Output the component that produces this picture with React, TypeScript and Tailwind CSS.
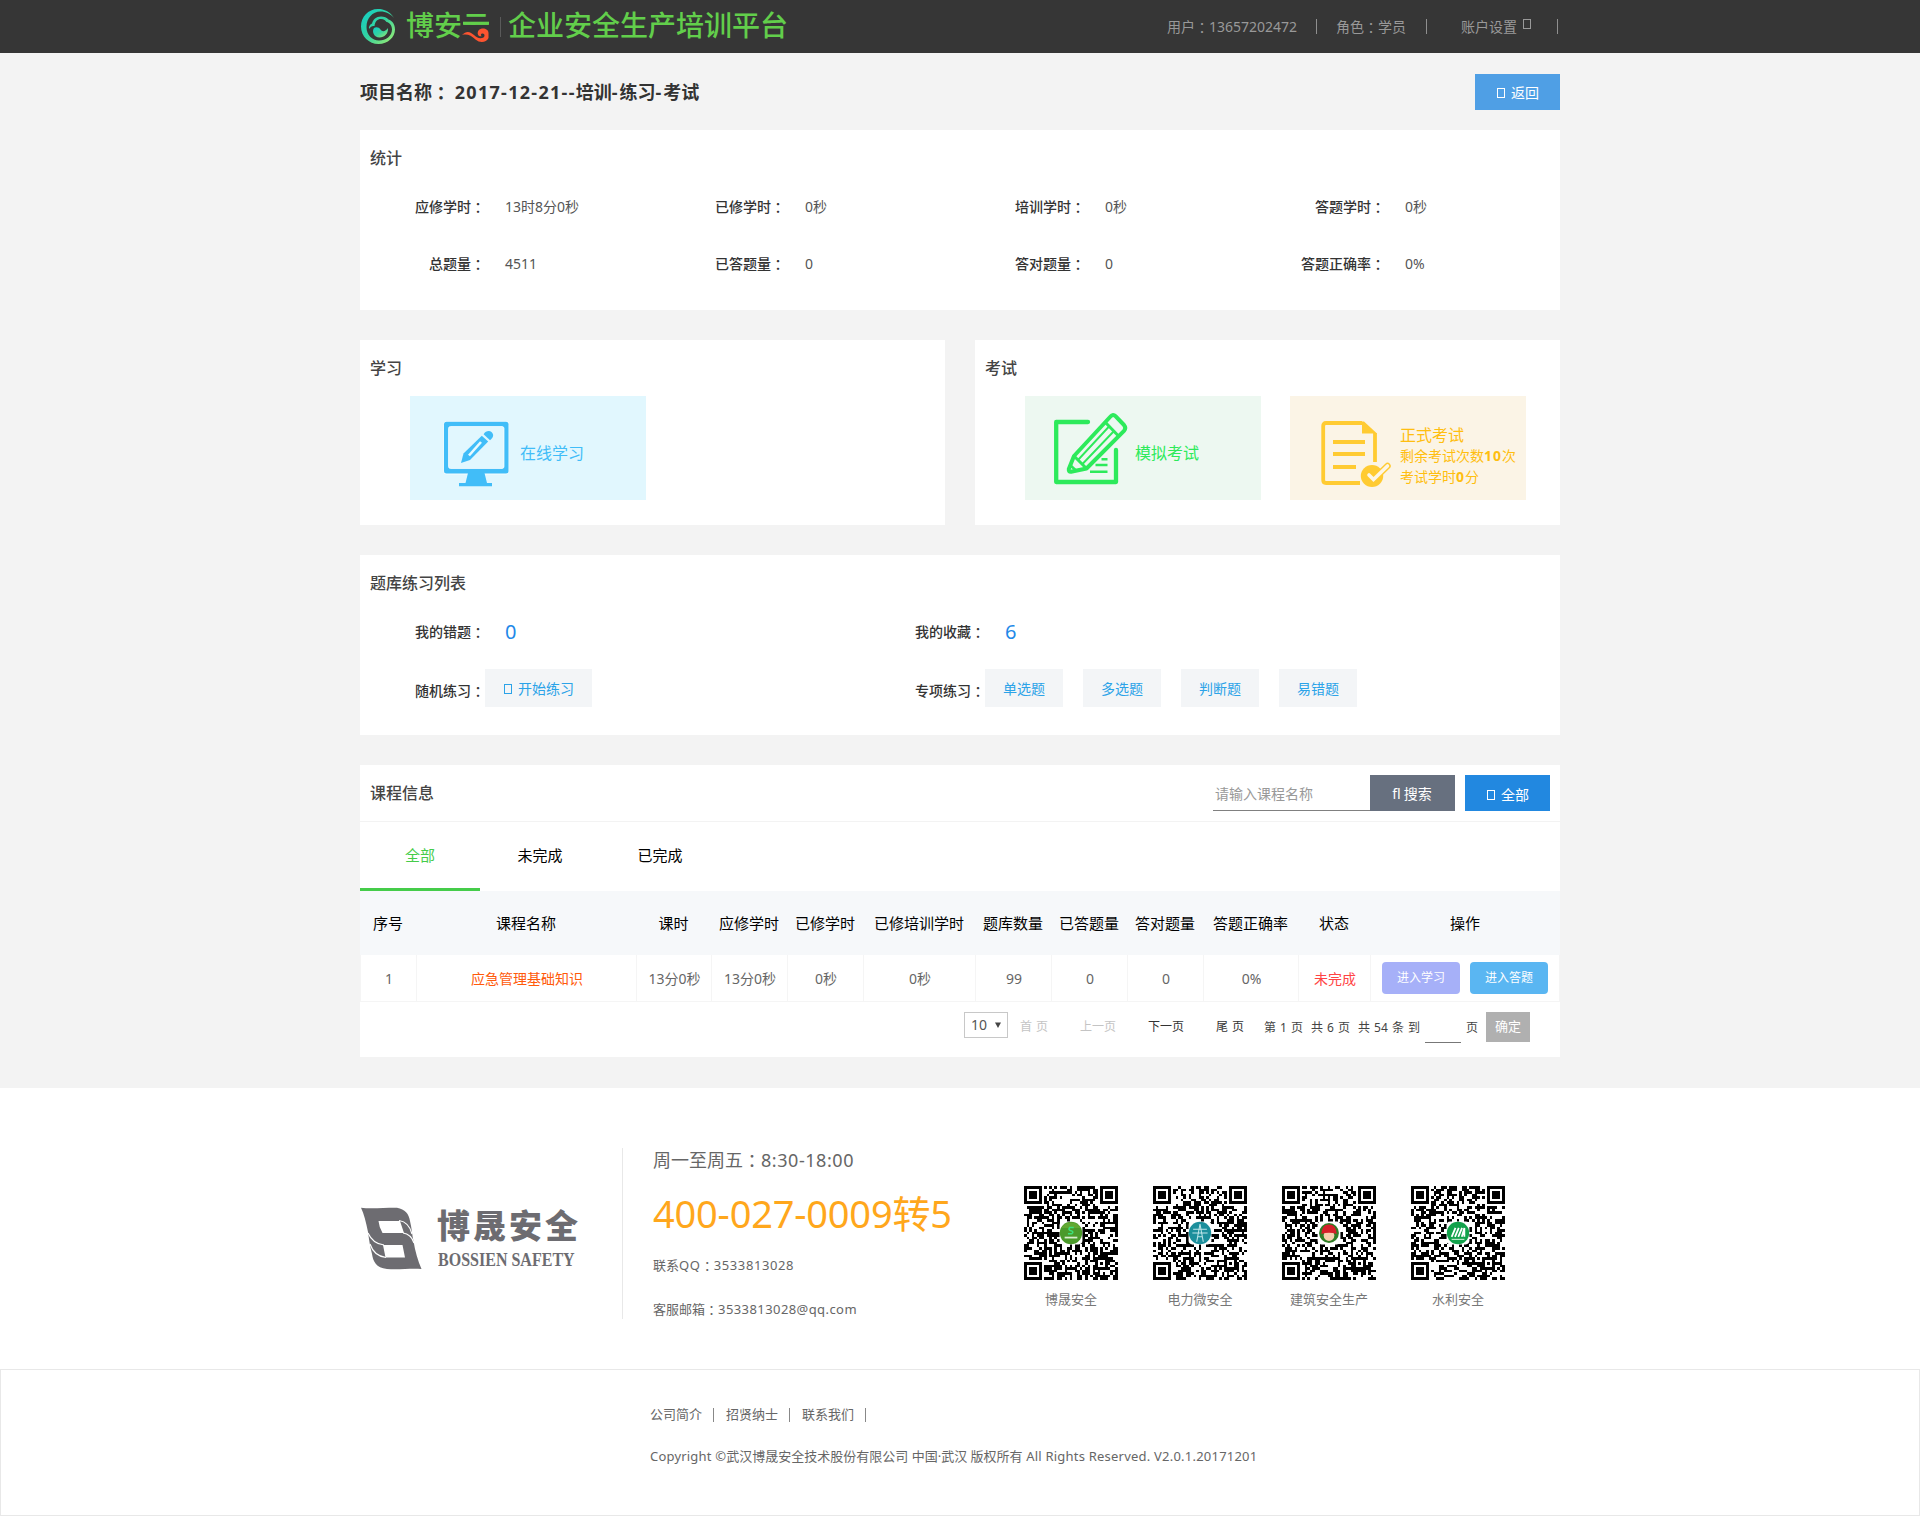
import React from "react";

/* Full-width colon centred in its em box. */
function Colon() {
  return <span className="inline-block translate-y-px font-['Noto_Sans_CJK_TC'] leading-none">：</span>;
}

/* Empty box shown by the icon font when its glyph is unavailable. */
function GlyphBox({ className = "" }: { className?: string }) {
  return <span className={`inline-block h-[10px] w-2 shrink-0 border border-current ${className}`} />;
}

function BrandMark() {
  return (
    <svg width="34" height="35" viewBox="0 0 34 35" className="shrink-0">
      <defs>
        <linearGradient id="brand" x1="0" y1="0" x2="1" y2="1">
          <stop offset="0" stopColor="#0fcdc8" />
          <stop offset="0.5" stopColor="#35d3a0" />
          <stop offset="1" stopColor="#a4ee6c" />
        </linearGradient>
      </defs>
      <g fill="url(#brand)">
        <path d="M33 9C29 2.500 23 0 17 0 7 0 0 8 0 17.500 0 27.500 8 35 17.500 35 27 35 34 28 34 20.500 34 15 31 11.500 27.500 10.500 26 8.500 23 7.500 20 7.500 15 7.500 12 10.500 11 14.500 8.500 15.500 7.500 18 8 20 9.500 17.500 11.500 17 13.500 17 14 12.500 16.500 10 20 10 23 10 24.500 11.500 25.500 13 29 13.500 31 17 31 20.500 31 27 25 31.500 18 31.500 11 31.500 5.500 26 5.500 18 5.500 9 11.500 2.500 19.500 2.500 25 2.500 29.500 5 33 9Z" />
        <path d="M13 19C15 17.500 18 18 19.500 20.500 21.500 23.500 25 22 27 19 27.500 24.500 23.500 28.500 18.500 28.500 13 28.500 10.500 22.500 13 19Z" />
      </g>
    </svg>
  );
}

function BrandName() {
  return (
    <div className="relative -mt-1 ml-[11px] flex h-10 w-[84px] items-center text-[28px] font-medium leading-10 text-[#62ce4b]">
      博安云
      <svg className="absolute left-[56px] top-[16px]" width="28" height="26" viewBox="0 0 28 26">
        <rect x="0" y="4" width="28" height="22" fill="#363636" />
        <path d="M1 2.200H27" stroke="#62ce4b" strokeWidth="3" />
        <path
          d="M0 14C5 8.500 9 11.500 12 14 14.500 16.500 18 18.500 21.500 16.500 23 15.500 23 12.500 20.500 12.500 18.500 12.500 18.500 15 20 15 16.500 16.500 14.500 12.500 16.500 9.500 19.500 6 26.500 7.500 26.500 12 L26.500 17C24.500 21.500 18 22.500 13.500 18.500 9.500 14.500 5 12.500 0 14Z"
          fill="#fd5430"
        />
      </svg>
    </div>
  );
}

function Header() {
  return (
    <header className="h-[53px] bg-[#363636]">
      <div className="mx-auto flex h-full w-[1200px] items-center justify-between">
        <div className="flex h-[51px] items-center pl-px">
          <BrandMark />
          <BrandName />
          <span className="ml-[10px] h-5 w-px bg-[#5a5a5a]" />
          <span className="-mt-1 ml-[7px] text-[28px] font-medium leading-10 text-[#62ce4b]">企业安全生产培训平台</span>
        </div>
        <div className="flex items-center pr-[2px] text-sm text-[#999]">
          <span className="w-[130px] whitespace-nowrap">
            用户<Colon />13657202472
          </span>
          <span className="ml-[19px] h-[15px] w-px bg-[#8f8f8f]" />
          <span className="ml-[19px] w-[70px]">
            角色<Colon />学员
          </span>
          <span className="ml-5 h-[15px] w-px bg-[#8f8f8f]" />
          <span className="ml-[34px]">账户设置</span>
          <GlyphBox className="-mt-[6px] ml-[6px] h-[9px]" />
          <span className="ml-[26px] h-[15px] w-px bg-[#8f8f8f]" />
        </div>
      </div>
    </header>
  );
}

function PanelTitle({ children }: { children: React.ReactNode }) {
  return <h2 className="flex h-14 items-center pl-[10px] text-base font-medium text-[#444]">{children}</h2>;
}

const stats = [
  ["应修学时", "13时8分0秒"],
  ["已修学时", "0秒"],
  ["培训学时", "0秒"],
  ["答题学时", "0秒"],
  ["总题量", "4511"],
  ["已答题量", "0"],
  ["答对题量", "0"],
  ["答题正确率", "0%"],
];

function Stats() {
  return (
    <section className="h-[180px] bg-white">
      <PanelTitle>统计</PanelTitle>
      <div className="-mt-2 grid grid-cols-4">
        {stats.map(([k, v]) => (
          <div key={k} className="flex h-[57px] items-center text-sm">
            <span className="w-[125px] text-right font-medium text-[#333]">
              {k}
              <Colon />
            </span>
            <span className="ml-5 pt-px text-[#555]">{v}</span>
          </div>
        ))}
      </div>
    </section>
  );
}

function MonitorIcon() {
  return (
    <svg width="66" height="68" viewBox="-1 -1 66 68">
      <rect x="-0.500" y="0" width="65.500" height="53.500" rx="3.500" fill="#fff" opacity=".7" />
      <rect x="0" y="0.700" width="64.500" height="51.800" rx="2.500" fill="#41bdf8" />
      <rect x="4.500" y="5.500" width="55.500" height="42" rx="2" fill="#e1f7fe" stroke="#fff" strokeOpacity=".7" />
      <path d="M24 52H40.500L43 62H48V65.300H15V62H21.500Z" fill="#41bdf8" />
      <path d="M37.800 14.700 44.200 20.500 26 39 17 42 19.500 32.500Z" fill="#41bdf8" />
      <path d="M39.600 13.200C42 9 48 8.500 49.200 14 49.200 16.500 47.500 18 46 19.300Z" fill="#41bdf8" />
      <path d="M37 21 25 34.500" stroke="#e9fafe" strokeWidth="2.600" />
    </svg>
  );
}

function PaperPencilIcon() {
  return (
    <svg width="76" height="76" viewBox="0 0 76 76" fill="none" stroke="#2dea5b">
      <path d="M34 10H2.200V70H62V38" strokeWidth="4.300" strokeLinecap="round" strokeLinejoin="round" />
      <path
        d="M20 44 56.500 4.500Q59 1.500 61.500 4.200L70 13Q72.500 16 70 18.800L32.500 56.500 17 59.800Q14.500 60 14.800 57Z"
        fill="#edf8f1"
        strokeWidth="4"
        strokeLinejoin="round"
      />
      <path d="M51.500 10.500 64.500 24" strokeWidth="3" />
      <path d="M20 44 32.500 56.500" strokeWidth="3" />
      <path d="M24 48 55 14.500M28 52.500 60.500 18.500" strokeWidth="1.900" />
      <path d="M16 53 21.500 58" strokeWidth="2.500" />
      <path d="M47.500 47.300H53.500M41.500 53H53.500M36 59.800H53.500" strokeWidth="2.600" />
    </svg>
  );
}

function DocumentCheckIcon() {
  return (
    <svg width="72" height="68" viewBox="0 0 72 68" fill="none" stroke="#ffcb32">
      <path d="M39 62H5Q2.200 62 2.200 59V5Q2.200 2 5 2H41M54 12V41" strokeWidth="3.800" />
      <path d="M41 .500H43L56 12.500H41Z" fill="#ffcb32" stroke="none" />
      <path d="M12 21H44M12 33H44M12 46H35" strokeWidth="4" />
      <ellipse cx="51" cy="55" rx="11.200" ry="11" fill="#ffcb32" stroke="none" />
      <path d="M48 54 52.500 58.500 66.500 45" strokeWidth="6.500" strokeLinejoin="round" strokeLinecap="round" />
      <path d="M48 54 52.500 58.500 66.500 45" stroke="#fdf6e6" strokeWidth="3.600" strokeLinecap="round" />
    </svg>
  );
}

function StudyAndExam() {
  return (
    <div className="mt-[30px] grid grid-cols-2 gap-[30px]">
      <section className="h-[185px] bg-white">
        <PanelTitle>学习</PanelTitle>
        <div className="ml-[50px] flex h-[104px] w-[236px] items-start bg-[#e1f7fe]">
          <div className="ml-[33px] mt-6 w-[77px]">
            <MonitorIcon />
          </div>
          <span className="mt-[45px] text-base text-[#41bdf8]">在线学习</span>
        </div>
      </section>
      <section className="h-[185px] bg-white">
        <PanelTitle>考试</PanelTitle>
        <div className="ml-[50px] flex gap-[29px]">
          <div className="flex h-[104px] w-[236px] items-start bg-[#edf8f1]">
            <div className="ml-[29px] mt-4 w-[81px]">
              <PaperPencilIcon />
            </div>
            <span className="mt-[45px] text-base text-[#2dea5b]">模拟考试</span>
          </div>
          <div className="flex h-[104px] w-[236px] items-start bg-[#fbf4e6]">
            <div className="ml-[31px] mt-[25px] w-[79px] shrink-0">
              <DocumentCheckIcon />
            </div>
            <div className="mt-[29px] whitespace-nowrap text-sm leading-[21px] text-[#ffbe10]">
              <div className="h-5 text-base leading-[21px]">正式考试</div>
              <div>
                剩余考试次数<b className="tracking-[1px]">10</b>次
              </div>
              <div>
                考试学时<b className="tracking-[1px]">0</b>分
              </div>
            </div>
          </div>
        </div>
      </section>
    </div>
  );
}

function Label({ children }: { children: React.ReactNode }) {
  return (
    <span className="w-[70px] whitespace-nowrap text-sm font-medium text-[#333]">
      {children}
      <Colon />
    </span>
  );
}

function Practice() {
  return (
    <section className="mt-[30px] h-[180px] bg-white">
      <PanelTitle>题库练习列表</PanelTitle>
      <div className="grid grid-cols-[500px_1fr] pl-[55px]">
        <div className="flex h-[41px] items-center">
          <Label>我的错题</Label>
          <span className="ml-5 text-xl text-[#2288e8]">0</span>
        </div>
        <div className="flex h-[41px] items-center">
          <Label>我的收藏</Label>
          <span className="ml-5 text-xl text-[#2288e8]">6</span>
        </div>
        <div className="mt-[17px] flex h-[38px] items-center">
          <div className="pt-[3px]">
            <Label>随机练习</Label>
          </div>
          <span className="flex h-[38px] w-[107px] items-center bg-[#f3f5f7] pl-[19px] pt-px text-sm text-[#2ba3e8]">
            <GlyphBox className="mr-[6px]" />
            开始练习
          </span>
        </div>
        <div className="mt-[17px] flex h-[38px] items-center">
          <div className="pt-[3px]">
            <Label>专项练习</Label>
          </div>
          <div className="flex gap-5">
            {["单选题", "多选题", "判断题", "易错题"].map((t) => (
              <span key={t} className="flex h-[38px] w-[78px] items-center justify-center bg-[#f3f5f7] pt-px text-sm text-[#2ba3e8]">
                {t}
              </span>
            ))}
          </div>
        </div>
      </div>
    </section>
  );
}

const columns = "grid grid-cols-[56px_220px_75px_76px_76px_112px_76px_76px_76px_95px_72px_190px]";
const heads = ["序号", "课程名称", "课时", "应修学时", "已修学时", "已修培训学时", "题库数量", "已答题量", "答对题量", "答题正确率", "状态", "操作"];
const row = ["1", "应急管理基础知识", "13分0秒", "13分0秒", "0秒", "0秒", "99", "0", "0", "0%", "未完成"];

function Courses() {
  return (
    <section className="mt-[30px] h-[292px] bg-white">
      <div className="flex h-[57px] items-start justify-between border-b border-[#f3f3f3] pr-[10px]">
        <PanelTitle>课程信息</PanelTitle>
        <div className="mt-[10px] flex h-9 text-sm">
          <span className="flex w-[157px] items-center border-b border-[#808080] pl-[2px] pt-[2px] text-[#999]">请输入课程名称</span>
          <span className="flex w-[85px] items-center justify-center gap-[3px] bg-[#67707f] pr-px pt-[2px] text-white">
            <span>ﬂ</span>搜索
          </span>
          <span className="ml-[10px] flex w-[85px] items-center bg-[#2288e0] pl-[22px] pt-[3px] text-white">
            <GlyphBox className="mr-[6px]" />
            全部
          </span>
        </div>
      </div>
      <nav className="flex h-[69px] text-[15px] text-black">
        <span className="flex w-[120px] items-center justify-center border-b-[3px] border-[#45cc4a] pt-px text-[#45cc4a]">全部</span>
        <span className="flex w-[120px] items-center justify-center pb-[2px]">未完成</span>
        <span className="flex w-[120px] items-center justify-center pb-[2px]">已完成</span>
      </nav>
      <div className={`${columns} h-16 items-center bg-[#f6f8fa] text-center text-[15px] text-black`}>
        {heads.map((h) => (
          <span key={h} className="whitespace-nowrap">
            {h}
          </span>
        ))}
      </div>
      <div className={`${columns} h-[47px] border-b border-r border-[#f5f5f5] text-sm text-[#666]`}>
        {row.map((c, i) => (
          <span
            key={i}
            className={`flex items-center justify-center border-l border-[#f5f5f5] pl-px pt-px ${
              i === 1 ? "text-[#ff5a0a]" : i === 10 ? "text-[#ff4444]" : ""
            }`}
          >
            {c}
          </span>
        ))}
        <span className="flex items-center gap-[10px] border-l border-[#f5f5f5] pl-[11px] text-xs text-white">
          <span className="flex h-8 w-[78px] items-center justify-center rounded-sm bg-[#a6b0f8]">进入学习</span>
          <span className="flex h-8 w-[78px] items-center justify-center rounded-sm bg-[#5ab6f2]">进入答题</span>
        </span>
      </div>
      <div className="flex h-[50px] items-center pl-[604px] text-xs text-[#444] [word-spacing:1px]">
        <span className="-mt-[4px] flex h-[26px] w-11 items-center border border-[#c8c8c8] pl-[6px] text-sm text-[#555]">
          10
          <svg className="ml-2" width="6" height="6" viewBox="0 0 6 6">
            <path d="M0 .500H6L3 6Z" fill="#444" />
          </svg>
        </span>
        <span className="ml-3 w-[60px] text-[#c4c4c4]">首 页</span>
        <span className="w-[68px] text-[#c4c4c4]">上一页</span>
        <span className="w-[68px] text-[#333]">下一页</span>
        <span className="w-12 text-[#333]">尾 页</span>
        <span className="w-[47px] whitespace-nowrap pt-[2px]">第 1 页</span>
        <span className="w-[47px] whitespace-nowrap pt-[2px]">共 6 页</span>
        <span className="w-[67px] whitespace-nowrap pt-[2px]">共 54 条 到</span>
        <span className="h-[31px] w-9 border-b border-[#777]" />
        <span className="ml-[5px] w-5 pt-[2px]">页</span>
        <span className="flex h-[30px] w-11 items-center justify-center bg-[#b0b0b0] text-[13px] text-white">确定</span>
      </div>
    </section>
  );
}

function CompanyMark() {
  return (
    <svg width="61" height="63" viewBox="0 0 61 63" className="shrink-0">
      <path
        d="M0 .700C10 2 25 .500 36 .700 44 2 48 7 49 14 51 22 51 28 52.500 34 54 44 57 54 60.500 62 50 61 38 63 26 62 15 61 12 54 11 47 9 40 8 32 7 25 5 15 3 7 0 .700Z"
        fill="#6d6c71"
      />
      <path d="M17.500 14H39L43 26H21.500Q18 20 17.500 14ZM22 38H41.500L44 50.500H24.500Z" fill="#fff" />
      <path d="M38 13.500Q48 15 51 27M42 26Q50 27 53 36M7 26Q12 37 23 38M9 37Q13 49 25 50.500" stroke="#fff" strokeWidth="1.200" fill="none" />
    </svg>
  );
}

const N = 37;

function finder(x: number, y: number): boolean | null {
  for (const [cx, cy] of [[0, 0], [N - 7, 0], [0, N - 7]]) {
    const dx = x - cx;
    const dy = y - cy;
    if (dx >= -1 && dx <= 7 && dy >= -1 && dy <= 7) {
      const d = Math.max(Math.abs(dx - 3), Math.abs(dy - 3));
      return d === 3 || d <= 1;
    }
  }
  const d = Math.max(Math.abs(x - 30), Math.abs(y - 30));
  return d <= 2 ? d !== 1 : null;
}

function qrPath(seed: number): string {
  let s = seed;
  let path = "";
  for (let y = 0; y < N; y++) {
    for (let x = 0; x < N; x++) {
      s = (Math.imul(s, 1664525) + 1013904223) >>> 0;
      const fixed = finder(x, y);
      const on = fixed === null ? s / 4294967296 < 0.52 : fixed;
      if (on) path += `M${x} ${y}h1v1h-1z`;
    }
  }
  return path;
}

const badges = [
  <g key="a">
    <circle cx="18.500" cy="18.500" r="4.400" fill="#4a9a2a" />
    <path d="M14.700 16.500A4.400 4.400 0 0 1 22.300 16.500Z" fill="#62a832" />
    <path d="M19.600 16.300H18Q17.200 17.300 18.500 17.600T18.800 18.800H17.300" stroke="#3fe07a" strokeWidth=".6" fill="none" />
    <path d="M16 20.300H21" stroke="#d8eed0" strokeWidth=".7" />
  </g>,
  <g key="b">
    <circle cx="18.500" cy="18.500" r="4.400" fill="#1c8f9c" />
    <path d="M18.500 15 17.200 22M18.500 15 19.800 22M15.800 17H21.200M15.500 18.500H21.500M17.500 20H19.500" stroke="#bfe6ea" strokeWidth=".4" fill="none" />
  </g>,
  <g key="c">
    <circle cx="18.500" cy="18.500" r="3.900" fill="#2f7d26" />
    <circle cx="18.500" cy="19.500" r="2.100" fill="#f6cfae" />
    <path d="M15.500 18.900Q15.700 15.200 18.500 15.200T21.500 18.900Q18.500 18 15.500 18.900Z" fill="#d5202a" />
  </g>,
  <g key="d">
    <circle cx="18.500" cy="18.500" r="4.400" fill="#12a24b" />
    <path d="M16 20 17.500 16.500M17.300 20 18.800 16.500M18.600 20 20.100 16.500M20 20 21 16.500V20" stroke="#fff" strokeWidth=".7" fill="none" />
    <path d="M16 21H21" stroke="#d5f0de" strokeWidth=".4" />
  </g>,
];

const codes = ["博晟安全", "电力微安全", "建筑安全生产", "水利安全"];

function Footer() {
  return (
    <footer className="mt-[31px] bg-white text-[#666]">
      <div className="mx-auto flex h-[281px] w-[1200px] items-start">
        <div className="ml-px mt-[119px] flex w-[261px] items-start">
          <CompanyMark />
          <div className="ml-[15px] text-[#6d6c71]">
            <div className="mt-[2px] flex h-[34px] w-[150px] items-center whitespace-nowrap text-[33px] font-black leading-[34px] tracking-[3px]">
              博晟安全
            </div>
            <div className="ml-px mt-[5px] w-[160px] origin-left scale-x-[0.89] whitespace-nowrap font-['Liberation_Serif'] text-[18px] font-bold leading-6">
              BOSSIEN SAFETY
            </div>
          </div>
        </div>
        <div className="mt-[60px] h-[171px] w-[371px] border-l border-[#e8e8e8] pl-[29px] text-[13px]">
          <div className="h-6 pl-px text-lg leading-6">
            周一至周五<Colon />
            <span className="tracking-[0.550px]">8:30-18:00</span>
          </div>
          <div className="mt-[17px] h-12 whitespace-nowrap pl-px text-[38px] leading-[48px] tracking-[-0.200px] text-[#ffa71c]">400-027-0009转5</div>
          <div className="mt-[18px] h-5 pl-px leading-5">
            联系<span className="tracking-[0.700px]">QQ</span>
            <Colon />
            <span className="tracking-[0.600px]">3533813028</span>
          </div>
          <div className="mt-6 h-5 pl-px leading-5">
            客服邮箱<Colon />
            <span className="tracking-[0.420px]">3533813028@qq.com</span>
          </div>
        </div>
        <div className="ml-[31px] mt-[98px] flex gap-[35px]">
          {codes.map((name, i) => (
            <div key={name} className="flex w-[94px] flex-col items-center text-[13px] text-[#777]">
              <svg width="94" height="94" viewBox="0 0 37 37" className="shrink-0">
                <path d={qrPath(9176 + i * 7331)} fill="#000" shapeRendering="crispEdges" />
                <rect x="14" y="14" width="9" height="9" rx="1.500" fill="#fff" />
                {badges[i]}
              </svg>
              <span className="mt-[9px] whitespace-nowrap leading-5">{name}</span>
            </div>
          ))}
        </div>
      </div>
      <div className="h-[147px] border border-[#e8e8e8]">
        <div className="mx-auto w-[1200px] pl-[290px] text-[13px]">
          <div className="mt-[35px] flex h-5 items-center">
            {["公司简介", "招贤纳士", "联系我们"].map((t) => (
              <React.Fragment key={t}>
                <span>{t}</span>
                <span className="ml-[11px] mr-3 h-[14px] w-px bg-[#888]" />
              </React.Fragment>
            ))}
          </div>
          <div className="mt-[21px] h-5 whitespace-nowrap leading-5">
            <span className="tracking-[0.200px]">Copyright ©</span>武汉博晟安全技术股份有限公司 中国·武汉 版权所有
            <span className="tracking-[0.220px]"> All Rights Reserved. V2.0.1.20171201</span>
          </div>
        </div>
      </div>
    </footer>
  );
}

export default function App() {
  return (
    <div className="min-h-[1516px] bg-[#f3f3f3] font-['Noto_Sans','Noto_Sans_CJK_SC',sans-serif]">
      <Header />
      <main className="mx-auto w-[1200px]">
        <div className="flex h-[77px] items-center justify-between">
          <h1 className="text-lg font-bold text-[#333]">
            项目名称<Colon /> <span className="tracking-[1.300px]">2017-12-21--</span>培训<span className="tracking-[2px]">-</span>练习
            <span className="tracking-[2px]">-</span>考试
          </h1>
          <span className="flex h-9 w-[85px] items-center bg-[#4f9fe5] pl-[22px] pt-[3px] text-sm text-white">
            <GlyphBox className="mr-[6px]" />
            返回
          </span>
        </div>
        <Stats />
        <StudyAndExam />
        <Practice />
        <Courses />
      </main>
      <Footer />
    </div>
  );
}
